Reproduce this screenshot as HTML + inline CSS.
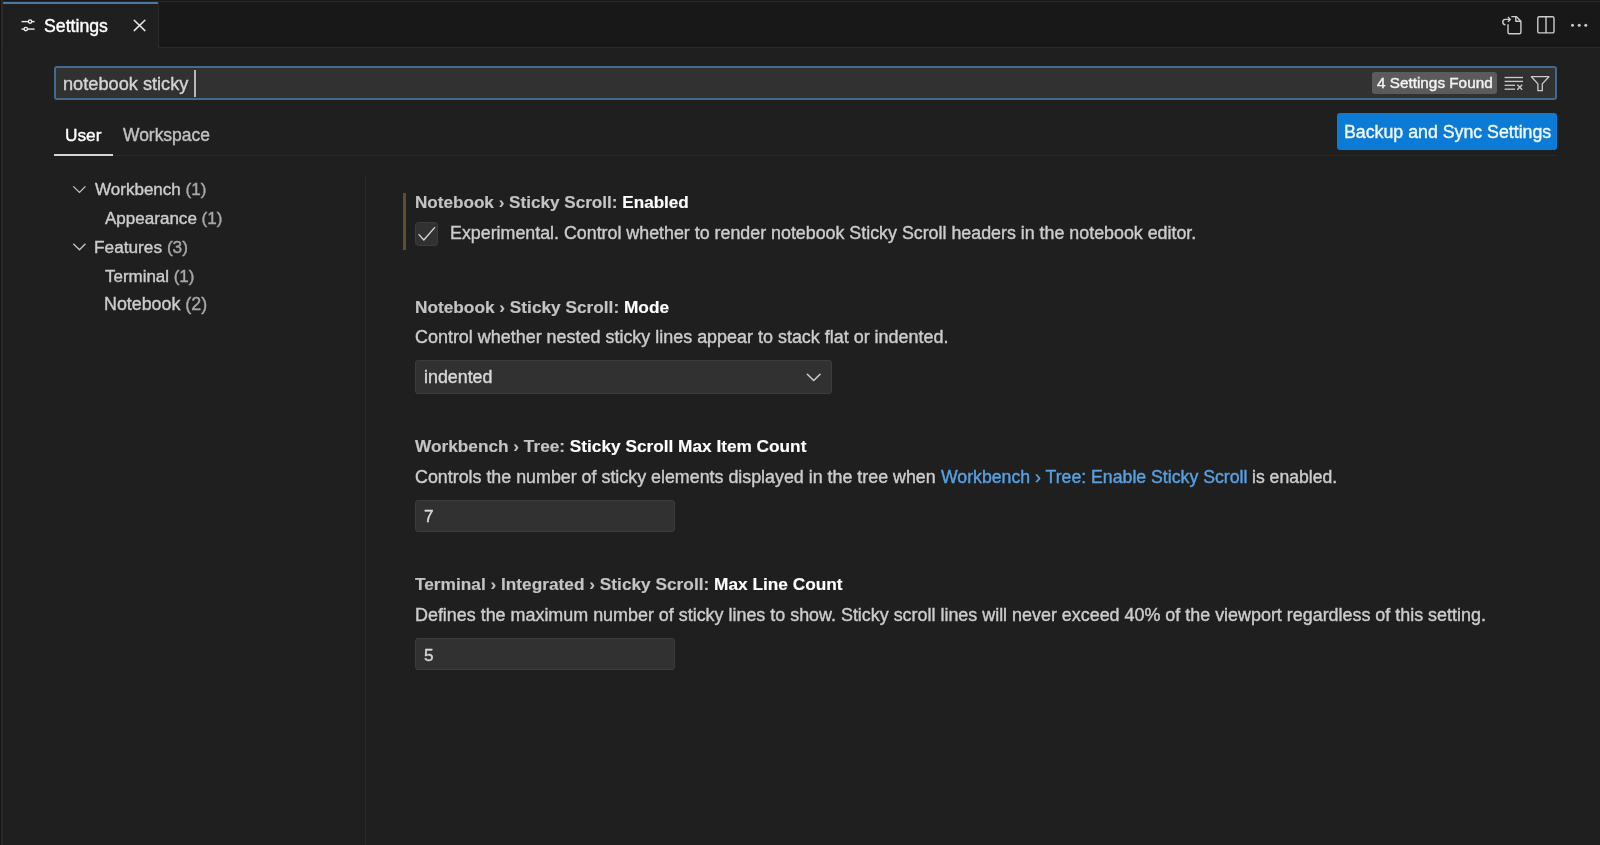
<!DOCTYPE html>
<html>
<head>
<meta charset="utf-8">
<style>
html,body{margin:0;padding:0;}
body{width:1600px;height:845px;overflow:hidden;background:#1f1f1f;position:relative;font-family:"Liberation Sans",sans-serif;color:#cccccc;}
.a{position:absolute;white-space:pre;}
.t{position:absolute;white-space:pre;line-height:20px;height:20px;-webkit-text-stroke:0.4px currentColor;will-change:transform;}
.b{-webkit-text-stroke:0.15px currentColor;}
svg{position:absolute;overflow:visible;}
</style>
</head>
<body>
<!-- window left edge -->
<div class="a" style="left:0;top:0;width:1px;height:845px;background:#151515"></div>
<div class="a" style="left:1px;top:0;width:2px;height:845px;background:#2a2a2a"></div>
<div class="a" style="left:3px;top:0;width:1px;height:845px;background:#1b1b1b"></div>

<!-- tab bar -->
<div class="a" style="left:4px;top:0;width:1596px;height:47px;background:#181818"></div>
<div class="a" style="left:4px;top:1px;width:1596px;height:1px;background:#2a2a2a"></div>
<div class="a" style="left:4px;top:47px;width:1596px;height:1px;background:#2b2b2b"></div>
<!-- active tab -->
<div class="a" style="left:3px;top:2px;width:155px;height:46px;background:#1f1f1f"></div>
<div class="a" style="left:3px;top:2px;width:155px;height:2px;background:#4a78a0"></div>
<div class="a" style="left:158px;top:2px;width:1px;height:45px;background:#2b2b2b"></div>

<!-- settings icon -->
<svg style="left:0;top:0" width="60" height="48">
  <g stroke="#ececec" stroke-width="1.4" fill="none">
    <line x1="21.5" y1="21.6" x2="34.6" y2="21.6"/>
    <line x1="21.5" y1="29.1" x2="34.6" y2="29.1"/>
  </g>
  <g stroke="#ececec" stroke-width="1.4" fill="#1f1f1f">
    <circle cx="30.1" cy="21.6" r="1.7"/>
    <circle cx="25.8" cy="29.1" r="1.7"/>
  </g>
</svg>
<div class="t" id="tabtitle" style="left:44px;top:16px;font-size:17.7px;color:#ffffff">Settings</div>
<!-- close x -->
<svg style="left:0;top:0" width="160" height="48">
  <g stroke="#e6e6e6" stroke-width="1.5" stroke-linecap="round">
    <line x1="134.2" y1="20.2" x2="144.9" y2="30.6"/>
    <line x1="144.9" y1="20.2" x2="134.2" y2="30.6"/>
  </g>
</svg>

<!-- right actions -->
<svg style="left:0;top:0" width="1600" height="48">
  <g stroke="#cccccc" stroke-width="1.4" fill="none" stroke-linejoin="round">
    <!-- open json -->
    <path d="M1508 24.3 V32.3 Q1508 33.8 1509.5 33.8 H1519.4 Q1520.9 33.8 1520.9 32.3 V21.2 L1516.3 16.6 H1511.3"/>
    <path d="M1515.8 16.6 V21.2 H1520.9"/>
    <path d="M1505.5 24.8 A2.7 2.7 0 0 1 1505.5 19.4 H1510"/>
    <path d="M1508 17 L1510.3 19.4 L1508 21.8"/>
    <!-- split -->
    <rect x="1537.8" y="16.7" width="16.2" height="16.2" rx="1.5"/>
    <line x1="1546" y1="16.7" x2="1546" y2="32.9"/>
  </g>
  <g fill="#cccccc">
    <circle cx="1572.5" cy="25.3" r="1.5"/>
    <circle cx="1579.2" cy="25.3" r="1.5"/>
    <circle cx="1585.8" cy="25.3" r="1.5"/>
  </g>
</svg>

<!-- search box -->
<div class="a" style="left:54px;top:66px;width:1499px;height:30px;background:#313131;border:2px solid #416a8e;border-radius:3px"></div>
<div class="t" id="searchtext" style="left:63px;top:74px;font-size:18.2px;color:#d4d4d4">notebook sticky</div>
<div class="a" style="left:194px;top:70px;width:2px;height:27px;background:#b8b8b8"></div>
<div class="a" style="left:1372px;top:72px;width:125px;height:22px;background:#5b5b5b;border-radius:3px"></div>
<div class="t" id="badge" style="left:1377px;top:73px;font-size:15.3px;color:#f4f4f4">4 Settings Found</div>
<svg style="left:0;top:0" width="1600" height="110">
  <g stroke="#cccccc" stroke-width="1.3" fill="none">
    <line x1="1504.6" y1="77.5" x2="1523" y2="77.5"/>
    <line x1="1504.6" y1="81.4" x2="1523" y2="81.4"/>
    <line x1="1504.6" y1="85.3" x2="1515" y2="85.3"/>
    <line x1="1504.6" y1="89.2" x2="1515" y2="89.2"/>
    <line x1="1517.3" y1="84.8" x2="1522.2" y2="89.7"/>
    <line x1="1522.2" y1="84.8" x2="1517.3" y2="89.7"/>
    <path d="M1531.4 76.7 H1548.9 L1542.3 83.9 V90.7 H1537.9 V83.9 Z" stroke-linejoin="round"/>
  </g>
</svg>

<!-- user/workspace tabs -->
<div class="t" id="user" style="left:65px;top:125px;font-size:17.3px;color:#ffffff">User</div>
<div class="t" id="workspace" style="left:123px;top:125px;font-size:17.45px;color:#c2c2c2">Workspace</div>
<div class="a" style="left:54px;top:155px;width:1503px;height:1px;background:#2b2b2b"></div>
<div class="a" style="left:54px;top:154px;width:59px;height:2px;background:#d6d6d6"></div>

<!-- backup button -->
<div class="a" style="left:1337px;top:113px;width:220px;height:37px;background:#0b7bd6;border-radius:3px"></div>
<div class="t" id="btn" style="left:1344px;top:122px;font-size:17.75px;color:#f2faff">Backup and Sync Settings</div>

<!-- tree -->
<svg style="left:0;top:0" width="360" height="330">
  <g stroke="#c5c5c5" stroke-width="1.3" fill="none">
    <path d="M73.3 186.4 L79.5 192.4 L85.4 186.4"/>
    <path d="M73.3 243.8 L79.5 249.8 L85.4 243.8"/>
  </g>
</svg>
<div class="t" id="tr1" style="left:95px;top:180px;font-size:17.05px;color:#cccccc">Workbench <span style="color:#a8a8a8">(1)</span></div>
<div class="t" id="tr2" style="left:105px;top:209px;font-size:17.05px;color:#cccccc">Appearance <span style="color:#a8a8a8">(1)</span></div>
<div class="t" id="tr3" style="left:94px;top:237px;font-size:17.25px;color:#cccccc">Features <span style="color:#a8a8a8">(3)</span></div>
<div class="t" id="tr4" style="left:105px;top:267px;font-size:16.95px;color:#cccccc">Terminal <span style="color:#a8a8a8">(1)</span></div>
<div class="t" id="tr5" style="left:104px;top:294px;font-size:17.85px;color:#cccccc">Notebook <span style="color:#a8a8a8">(2)</span></div>

<!-- vertical separator -->
<div class="a" style="left:365px;top:176px;width:1px;height:669px;background:#2b2b2b"></div>

<!-- setting 1 -->
<div class="a" style="left:403px;top:193px;width:3px;height:57px;background:#5f4f2f"></div>
<div class="t b" id="h1" style="left:415px;top:193px;font-size:17.12px;font-weight:700;color:#c4c4c4">Notebook › Sticky Scroll: <span style="color:#ffffff">Enabled</span></div>
<div class="a" style="left:415px;top:222px;width:21px;height:22px;background:#313131;border:1px solid #3c3c3c;border-radius:3.5px"></div>
<svg style="left:0;top:0" width="460" height="260">
  <path d="M419 234.6 L423.8 240 L434.6 227.6" stroke="#d8d8d8" stroke-width="1.35" fill="none" stroke-linecap="round" stroke-linejoin="round"/>
</svg>
<div class="t" id="d1" style="left:450px;top:223px;font-size:17.83px;color:#cccccc">Experimental. Control whether to render notebook Sticky Scroll headers in the notebook editor.</div>

<!-- setting 2 -->
<div class="t b" id="h2" style="left:415px;top:297px;font-size:17.25px;font-weight:700;color:#c4c4c4">Notebook › Sticky Scroll: <span style="color:#ffffff">Mode</span></div>
<div class="t" id="d2" style="left:415px;top:327px;font-size:17.96px;color:#cccccc">Control whether nested sticky lines appear to stack flat or indented.</div>
<div class="a" style="left:415px;top:360px;width:415px;height:32px;background:#313131;border:1px solid #3c3c3c;border-radius:3px"></div>
<div class="t" id="dd" style="left:424px;top:367px;font-size:17.85px;color:#d8d8d8">indented</div>
<svg style="left:0;top:0" width="900" height="400">
  <path d="M807.3 374.3 L813.7 380.5 L820.1 374.3" stroke="#d0d0d0" stroke-width="1.5" fill="none" stroke-linecap="round" stroke-linejoin="round"/>
</svg>

<!-- setting 3 -->
<div class="t b" id="h3" style="left:415px;top:436px;font-size:17.24px;font-weight:700;color:#c4c4c4">Workbench › Tree: <span style="color:#ffffff">Sticky Scroll Max Item Count</span></div>
<div class="t" id="d3" style="left:415px;top:467px;font-size:17.85px;color:#cccccc">Controls the number of sticky elements displayed in the tree when</div>
<div class="t" id="d3l" style="left:941px;top:467px;font-size:17.7px;color:#5aa0e2">Workbench › Tree: Enable Sticky Scroll</div>
<div class="t" id="d3t" style="left:1252px;top:467px;font-size:17.6px;color:#cccccc">is enabled.</div>
<div class="a" style="left:415px;top:500px;width:258px;height:30px;background:#313131;border:1px solid #3c3c3c;border-radius:3px"></div>
<div class="t" id="n1" style="left:424px;top:506px;font-size:17.2px;color:#d8d8d8">7</div>

<!-- setting 4 -->
<div class="t b" id="h4" style="left:415px;top:574px;font-size:17.28px;font-weight:700;color:#c4c4c4">Terminal › Integrated › Sticky Scroll: <span style="color:#ffffff">Max Line Count</span></div>
<div class="t" id="d4" style="left:415px;top:605px;font-size:17.91px;color:#cccccc">Defines the maximum number of sticky lines to show. Sticky scroll lines will never exceed 40% of the viewport regardless of this setting.</div>
<div class="a" style="left:415px;top:638px;width:258px;height:30px;background:#313131;border:1px solid #3c3c3c;border-radius:3px"></div>
<div class="t" id="n2" style="left:424px;top:645px;font-size:17.2px;color:#d8d8d8">5</div>

</body>
</html>
